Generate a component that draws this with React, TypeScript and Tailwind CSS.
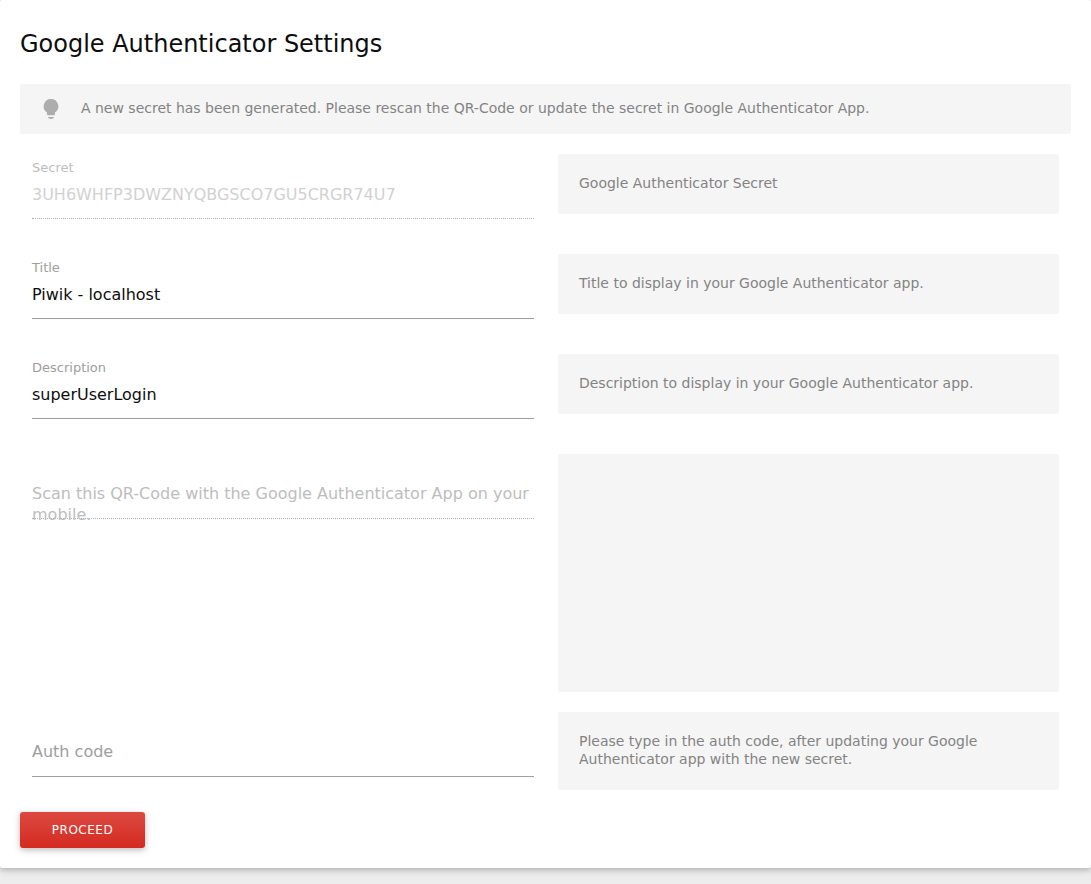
import React from "react";

type RowProps = {
  label?: string;
  value?: string;
  disabled?: boolean;
  placeholder?: string;
  help?: string;
  rowClass: string;
  helpClass: string;
};

function Row({ label, value, disabled, placeholder, help, rowClass, helpClass }: RowProps) {
  return (
    <div className={`flex gap-6 px-3 ${rowClass}`}>
      <div className="w-[502px] shrink-0">
        <div className={`h-[65px] border-b ${disabled ? "border-dotted border-[#b0b0b0]" : "border-[#9e9e9e]"}`}>
          {label && (
            <div className={`pt-[4px] text-[13px] leading-[19px] ${disabled ? "text-[#bdbdbd]" : "text-[#9e9e9e]"}`}>{label}</div>
          )}
          {value && <div className={`pt-[6px] text-[15.99px] leading-[24px] ${disabled ? "text-[#d1d1d1]" : "text-[#0d0d0d]"}`}>{value}</div>}
          {placeholder && (
            <div className={`pt-[29px] text-[16px] leading-[21px] ${disabled ? "text-[#bdbdbd]" : "text-[#9e9e9e]"}`}>{placeholder}</div>
          )}
        </div>
      </div>
      <div className={`w-[501px] shrink-0 rounded-[2px] bg-[#f5f5f5] pl-[21px] pr-5 pt-5 text-[13.992px] leading-[18px] text-[#838383] ${helpClass}`}>{help}</div>
    </div>
  );
}

export default function App() {
  return (
    <div className="h-[884px] w-[1091px] overflow-hidden bg-[#ededed] font-['DejaVu_Sans',sans-serif]">
      <main className="h-[868px] rounded-[2px] bg-white px-5 pt-[28px] shadow-[0_2px_5px_0_rgba(0,0,0,0.16),0_2px_10px_0_rgba(0,0,0,0.12)]">
        <h2 className="h-14 text-[23.99px] leading-[32px] text-[#0d0d0d]">Google Authenticator Settings</h2>
        <div className="mb-5 flex h-[50px] items-center rounded-[2px] bg-[#f5f5f5] pl-[23px] text-[13.992px] leading-[18px] text-[#838383]">
          <svg className="mr-[22px] h-5 w-4 shrink-0" viewBox="0 0 16 20" fill="#adadad">
            <path d="M8 0A7.300 7.300 0 0 0 4 13.400V15.300Q4 16.200 5 16.200H11Q12 16.200 12 15.300V13.400A7.300 7.300 0 0 0 8 0zM4.800 18h6.400Q10.500 20 8 20T4.800 18z" />
          </svg>
          <span className="-mt-[2px]">A new secret has been generated. Please rescan the QR-Code or update the secret in Google Authenticator App.</span>
        </div>
        <Row label="Secret" value="3UH6WHFP3DWZNYQBGSCO7GU5CRGR74U7" disabled help="Google Authenticator Secret" rowClass="h-[100px]" helpClass="h-[60px]" />
        <Row label="Title" value="Piwik - localhost" help="Title to display in your Google Authenticator app." rowClass="h-[100px]" helpClass="h-[60px]" />
        <Row label="Description" value="superUserLogin" help="Description to display in your Google Authenticator app." rowClass="h-[100px]" helpClass="h-[60px]" />
        <Row placeholder="Scan this QR-Code with the Google Authenticator App on your mobile." disabled rowClass="h-[258px]" helpClass="h-[238px]" />
        <Row placeholder="Auth code" help="Please type in the auth code, after updating your Google Authenticator app with the new secret." rowClass="h-[100px]" helpClass="h-[78px]" />
        <button className="flex h-9 w-[125px] items-center justify-center rounded-[3px] bg-linear-to-b from-[#dc4840] to-[#d4291f] text-[12px] tracking-[0.5px] text-white shadow-[0_2px_5px_0_rgba(0,0,0,0.16),0_2px_10px_0_rgba(0,0,0,0.12)]">PROCEED</button>
      </main>
    </div>
  );
}
